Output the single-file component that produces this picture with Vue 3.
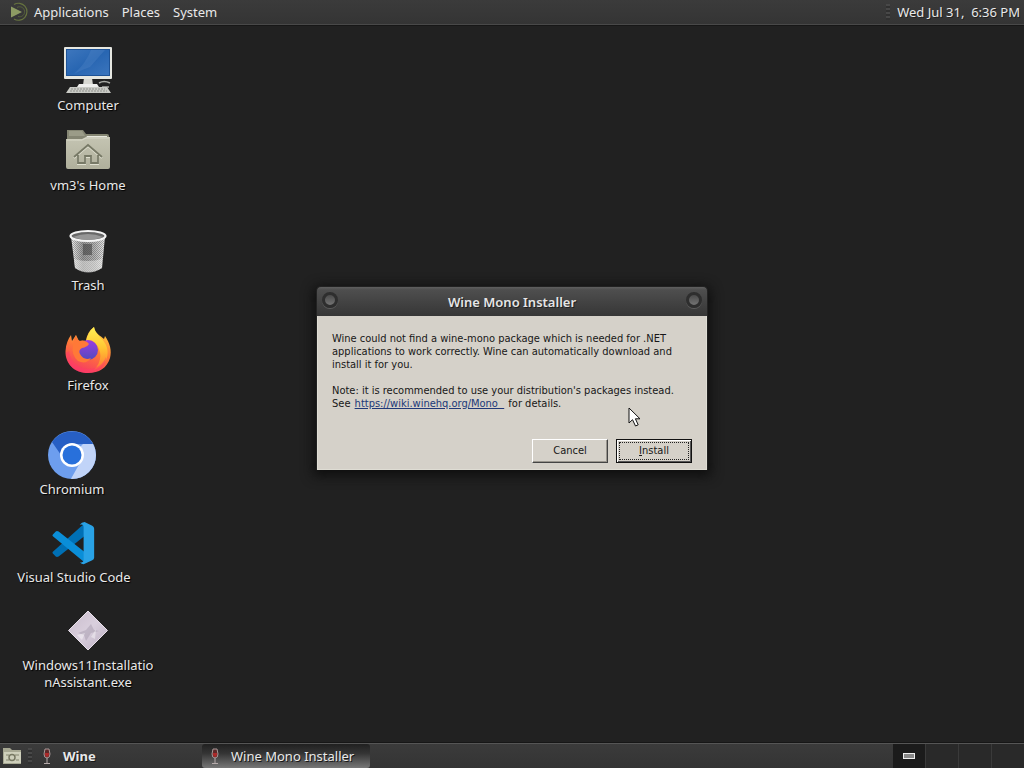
<script setup>
const icons = [
  { id: 'computer', label: 'Computer', x: 88, y: 46 },
  { id: 'home', label: "vm3's Home", x: 88, y: 126 },
  { id: 'trash', label: 'Trash', x: 88, y: 226 },
  { id: 'firefox', label: 'Firefox', x: 88, y: 326 },
  { id: 'chromium', label: 'Chromium', x: 72, y: 430 },
  { id: 'code', label: 'Visual Studio Code', x: 74, y: 518 },
  { id: 'exe', label: 'Windows11InstallationAssistant.exe', x: 88, y: 606 }
]
const menus = ['Applications', 'Places', 'System']
</script>

<template>
  <div class="screen">
    <header class="panel top">
      <svg class="distro" width="20" height="20" viewBox="0 0 20 20" fill="none">
        <path d="M2 4.500 13 10 2 15.500Z" fill="#8d9b63" />
        <path d="M5 2.500A8.500 8.500 0 1 1 5 17" stroke="#66733f" stroke-width="1.200" />
        <path d="M8 5.500A5 5 0 1 1 9 14.500" stroke="#56613b" />
      </svg>
      <nav class="menus">
        <button v-for="m in menus" :key="m" type="button">{{ m }}</button>
      </nav>
      <span class="grip right"></span>
      <time class="clock">Wed Jul 31,&nbsp; 6:36 PM</time>
    </header>

    <main class="desktop">
      <button
        v-for="i in icons"
        :key="i.id"
        type="button"
        class="launcher"
        :style="{ left: i.x + 'px', top: i.y - 26 + 'px' }"
      >
        <svg width="48" height="48" viewBox="0 0 48 48">
          <g v-if="i.id === 'computer'">
            <path d="M20 32h8l1 7H19Z" fill="#d8d8d2" />
            <path d="M15 38h18l2 3H13Z" fill="#eeeeec" />
            <rect x="0" y="1" width="48" height="32" rx="1" fill="#e6e7e1" />
            <rect x="2" y="3" width="44" height="27" fill="#1d5296" />
            <rect x="3" y="4" width="42" height="25" fill="url(#screenBlue)" />
            <path d="M27 4h14L26 21q-9 3-16 7 12-11 17-24Z" fill="#5b8bca" opacity=".3" />
            <path d="M35 37q5-3 11 0M38 41h7" stroke="#a9aba6" stroke-width="1.500" fill="none" />
            <path d="M6 41h37l4 6H2Z" fill="#c9cac5" />
            <path d="M7 43h34M6 45h37" stroke="#90928d" stroke-dasharray="2 1" />
          </g>
          <g v-else-if="i.id === 'home'">
            <path d="M3 4h16l3 4h21q2 0 2 2v31H3Z" fill="#858673" />
            <path d="M5 5h13l3 5H5Z" fill="#9b9c88" />
            <path d="M23 10h20v5H20Z" fill="#e8e8de" />
            <path d="M2 13h16l4-2h24v30q0 2-2 2H4q-2 0-2-2Z" fill="url(#folder)" />
            <path d="M3 14h15l4-2h23" stroke="#d9d9c9" fill="none" />
            <path d="M10 32 24 20l14 12M14 30v8h7v-7h6v7h7v-8" fill="none" stroke="#e0e0d0" stroke-width="2" />
            <path d="M10 31 24 19l14 12M14 29v8h7v-7h6v7h7v-8" fill="none" stroke="#777966" stroke-width="1.800" />
          </g>
          <g v-else-if="i.id === 'trash'">
            <path d="M7 10 11 42q13 9 27 0l3-32Z" fill="url(#metal)" />
            <path d="M7 10 11 42q13 9 27 0l3-32Z" fill="url(#mesh)" />
            <path d="M19 18h9v11h-9Z" fill="#444" opacity=".6" />
            <path d="M10 33q14 4 28 0v9q-14 8-27 0Z" fill="#eeeeec" opacity=".5" />
            <ellipse cx="24" cy="10" rx="17.500" ry="5" fill="#686868" stroke="#f4f4f4" stroke-width="2.200" />
            <path d="M9 11q15-6 30 0-15 6-30 0Z" fill="#aaa" opacity=".7" />
          </g>
          <g v-else-if="i.id === 'firefox'">
            <path d="M24 47C10 47 1 37 1.500 25 2 18 4 13 7 9l1 6 4-6 3 6q4-1 7 0Q23 6 30 1c1 7 7 9 10 12l1-3c5 7 7 15 5 22-3 10-11 15-22 15Z" fill="url(#fire)" />
            <path d="M22 15Q24 6 30 1c1 7 8 10 12 18 5 12-2 22-12 25 8-8 9-20 0-28-3-2-6-2-8-1Z" fill="url(#flame)" />
            <circle cx="24" cy="24" r="10" fill="url(#globe)" />
            <path d="M12 9q0 4 4 6 6-1 9 3-2 3-7 4-4 2-2 6 4 7 11 4-5 7-13 3Q7 29 9 19q0-5 3-10Z" fill="#ff7937" />
            <path d="M5 25q3 17 19 18 13 0 18-12-1 15-18 16Q4 47 2 27Z" fill="#ff3d67" opacity=".55" />
          </g>
          <g v-else-if="i.id === 'chromium'" transform="translate(0 -1)">
            <circle cx="24" cy="26" r="24" fill="#6d9eee" />
            <path d="M24 26 35 15h10q3 5 3 11a24 24 0 0 1-24 24l-1-.2L33 32Z" fill="#c1d4f8" />
            <path d="M4 13A24 24 0 0 1 45 15H24q-10 1-11 11Z" fill="#275fc4" />
            <circle cx="24" cy="26" r="12" fill="#fff" />
            <circle cx="24" cy="26" r="9.500" fill="#2870db" />
          </g>
          <g v-else-if="i.id === 'code'" transform="translate(0 2) scale(.96)">
            <path d="m3 33 29-26 5-4v13L9 38q-2 1-3 0l-3-3q-1-1 0-2Z" fill="#0070b5" />
            <path d="m3 15 3-3q1-1 3 0l28 22v11l-5-4L3 17q-1-1 0-2Z" fill="#0a8ed8" />
            <path d="m36 2 8 4q2 1 2 3v30q0 2-2 3l-9 4q-2 0-4-2 4 1 4-2V7q0-3-4-2 2-3 5-3Z" fill="#29a2e6" />
          </g>
          <g v-else>
            <path d="M24 5 43.500 24.500 24 44 4.500 24.500Z" fill="url(#gem)" stroke="#e8e0ea" />
            <path d="m14 27 8-3 5-6 3 6 5 1-8 2-5 8-2-6Z" fill="#91869a" opacity=".35" />
            <path d="m13 29 8-2-3 7Zm14 2 5-8-1 10Z" fill="#fff" opacity=".4" />
          </g>
        </svg>
        <span>{{ i.label }}</span>
      </button>

      <section class="dialog" role="dialog" aria-labelledby="dialog-title">
        <div class="titlebar">
          <button type="button" class="orb" aria-label="Window menu"></button>
          <h1 id="dialog-title">Wine Mono Installer</h1>
          <button type="button" class="orb" aria-label="Close"></button>
        </div>
        <div class="body">
          <p>Wine could not find a wine-mono package which is needed for .NET applications to work correctly. Wine can automatically download and install it for you.</p>
          <p>Note: it is recommended to use your distribution's packages instead.<br />See <a href="#">https://wiki.winehq.org/Mono&nbsp;&nbsp;</a> for details.</p>
          <div class="actions">
            <button type="button" class="btn">Cancel</button>
            <button type="button" class="btn default"><span><u>I</u>nstall</span></button>
          </div>
        </div>
      </section>

      <svg class="pointer" width="14" height="21" viewBox="0 0 14 21">
        <path d="M1 1v15l3.500-3.300L7.500 19l2.700-1.200-2.800-6H12Z" fill="#fff" stroke="#111" />
      </svg>
    </main>

    <footer class="panel bottom">
      <button type="button" class="show" aria-label="Show desktop">
        <svg width="20" height="18" viewBox="0 0 20 18">
          <path d="M1 1h7l2 2h9v14H1Z" fill="#a7a893" />
          <path d="M2 5h17v11H2Z" fill="#cecfbb" />
          <path d="M4 8h3M13 8h4M4 13h3M14 13h3" stroke="#858671" />
          <circle cx="10" cy="10.500" r="3" fill="none" stroke="#777863" stroke-width="1.500" />
        </svg>
      </button>
      <span class="grip"></span>
      <button v-for="t in ['Wine', 'Wine Mono Installer']" :key="t" type="button" class="task" :class="{ active: t !== 'Wine' }">
        <svg width="12" height="17" viewBox="0 0 12 17">
          <path d="M4 1h4l1 5q0 4-3 4T3 6Z" fill="#5c2929" stroke="#a79999" />
          <path d="M4 5h4v2q-2 4-4 0Z" fill="#ac2929" />
          <path d="M6 10v5M3 15.500h6" stroke="#b5aaaa" />
        </svg>
        <span>{{ t }}</span>
      </button>
      <div class="pager">
        <button type="button" class="current" aria-label="Workspace 1"><i></i></button>
        <button v-for="n in 3" :key="n" type="button" :aria-label="'Workspace ' + (n + 1)"></button>
      </div>
    </footer>

    <svg class="defs" width="0" height="0" aria-hidden="true">
      <defs>
        <linearGradient id="screenBlue" x2="1" y2="1"><stop stop-color="#3d76bd" /><stop offset=".5" stop-color="#2866b2" /><stop offset="1" stop-color="#3b75bd" /></linearGradient>
        <linearGradient id="folder" x2="0" y2="1"><stop stop-color="#c4c4b2" /><stop offset="1" stop-color="#b0b09c" /></linearGradient>
        <linearGradient id="metal"><stop stop-color="#f2f2f2" /><stop offset=".35" stop-color="#999" /><stop offset=".7" stop-color="#b5b5b5" /><stop offset="1" stop-color="#eee" /></linearGradient>
        <pattern id="mesh" width="2" height="2" patternUnits="userSpaceOnUse"><path d="M0 0h1v1H0ZM1 1h1v1H1Z" fill="#444" opacity=".4" /></pattern>
        <linearGradient id="fire" x1=".7" x2=".3" y2="1"><stop stop-color="#ffd43c" /><stop offset=".5" stop-color="#ff7838" /><stop offset="1" stop-color="#f53465" /></linearGradient>
        <linearGradient id="flame" x2="0" y2="1"><stop stop-color="#fff154" /><stop offset=".5" stop-color="#ffc431" /><stop offset="1" stop-color="#ff7535" /></linearGradient>
        <linearGradient id="globe" x2="0" y2="1"><stop stop-color="#9b3ce1" /><stop offset="1" stop-color="#524bbd" /></linearGradient>
        <linearGradient id="gem" x2="1" y2="1"><stop stop-color="#c9bccb" /><stop offset=".5" stop-color="#d9cfdd" /><stop offset="1" stop-color="#bbaec1" /></linearGradient>
      </defs>
    </svg>
  </div>
</template>

<style>
body { background: #212121; }
</style>

<style scoped>
.screen { min-height: 100vh; display: flex; flex-direction: column; background: #212121; color: #e9e9e9; font: 13px/18px "Noto Sans", sans-serif; overflow: hidden; }
button { font: inherit; color: inherit; background: none; border: 0; padding: 0; margin: 0; }
.panel { display: flex; align-items: center; box-sizing: border-box; background: linear-gradient(#3b3b3b, #343434); position: relative; }
.top { height: 26px; padding: 0 4px 2px 9px; border-bottom: 1px solid #171717; box-shadow: inset 0 -1px #494949; text-shadow: 1px 1px #222; }
.distro { margin-right: 5px; }
.menus { display: flex; gap: 13px; flex: 1; }
.grip { width: 4px; height: 16px; background: repeating-linear-gradient(#484848 0 2px, #303030 2px 4px); }
.right { margin-right: 7px; }
.clock { white-space: pre; }
.desktop { flex: 1; position: relative; display: grid; place-items: center; }
.launcher { position: absolute; width: 132px; margin-left: -66px; display: flex; flex-direction: column; align-items: center; gap: 3px; line-height: 17px; text-shadow: 1px 1px 1px #000; }
.launcher svg { overflow: visible; }
.launcher span { max-width: 132px; overflow-wrap: anywhere; }
.dialog { width: 392px; margin-bottom: 13px; border-radius: 5px 5px 0 0; box-shadow: 0 3px 12px 3px #0f0f0f; color: #171717; position: relative; }
.titlebar { display: flex; align-items: center; justify-content: space-between; box-sizing: border-box; height: 30px; padding: 1px 5px 0; border: 1px solid #222; border-bottom: 0; border-radius: 5px 5px 0 0; background: linear-gradient(#606060, #4e4e4e 10%, #363636); color: #e5e5e5; }
h1 { margin: 0; font-size: 13px; line-height: 18px; font-weight: 600; text-shadow: 1px 1px #202020; }
.orb { width: 16px; height: 16px; margin-bottom: 4px; border: 3px solid #2e2e2e; border-radius: 50%; background: linear-gradient(#4a4a4a, #747474); box-shadow: 0 1px #5d5d5d; }
.body { padding: 16px 14px 6px; margin: 0 1px; background: #d5d1c9; border: 1px solid #dfddd4; border-top: 0; font: 11px/13px "DejaVu Sans Condensed", "DejaVu Sans", sans-serif; }
p { margin: 0 0 13px; }
a { color: #203878; margin: 0 1px; }
.actions { display: flex; justify-content: flex-end; gap: 8px; margin-top: 29px; }
.btn { width: 76px; height: 24px; border: 1px solid; border-color: #fff #444 #444 #fff; box-shadow: inset -1px -1px #99958d; }
.default { border-color: #111; box-shadow: inset 1px 1px #fff, inset -1px -1px #555; padding: 2px; }
.default span { display: block; line-height: 16px; border: 1px dotted #222; }
.pointer { position: absolute; left: 628px; top: 381px; }
.bottom { height: 26px; border-top: 1px solid #161616; box-shadow: inset 0 1px #555; padding-top: 1px; }
.show { width: 24px; padding-left: 2px; height: 20px; }
.show svg, .launcher svg { display: block; }
.bottom > .grip { margin: 0 6px 0 4px; }
.task { display: flex; align-items: center; gap: 10px; box-sizing: border-box; width: 164px; height: 24px; padding-left: 3px; font-weight: 700; text-shadow: 1px 1px #181818; }
.active { width: 168px; padding-left: 7px; font-weight: 400; background: linear-gradient(#202020, #353535 40%, #777); border-radius: 3px; }
.pager { display: flex; gap: 1px; margin-left: auto; background: #3a3a3a; height: 24px; }
.pager button { width: 32px; background: #292929; }
.pager .current { background: #1b1b1b; display: grid; place-items: center; }
.pager i { width: 10px; height: 4px; border: 1px solid #eee; background: #888; }
.defs { position: absolute; }
</style>
